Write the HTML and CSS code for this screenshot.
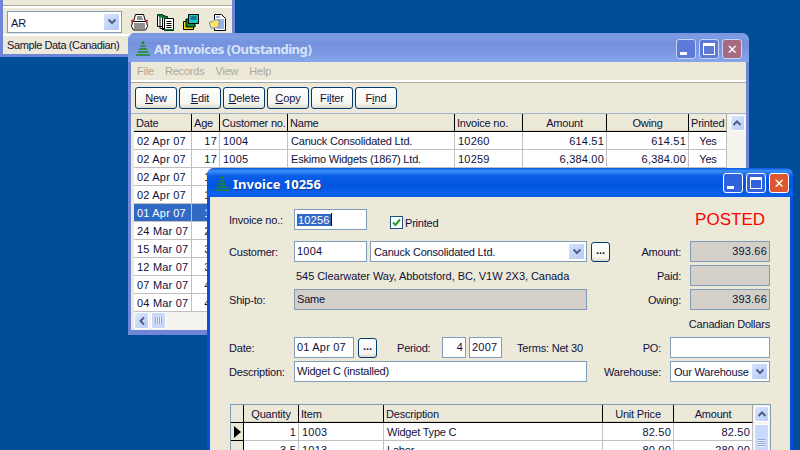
FILE: index.html
```html
<!DOCTYPE html>
<html lang="en">
<head>
<meta charset="utf-8">
<title>AR Invoices</title>
<link rel="stylesheet" href="styles.css">
</head>
<body>
<svg class="defs" width="0" height="0" aria-hidden="true">
  <symbol id="tree" viewBox="0 0 16 16">
    <path d="M6.500 2h3M5.500 5h5M4 8h8M2.500 11h11M1 14h14" stroke="#1f8a1f" stroke-width="1.600" fill="none"/>
    <path d="M8 0v3" stroke="#1f8a1f" stroke-width="1.500"/>
  </symbol>
  <symbol id="down" viewBox="0 0 10 8"><path d="M1.500 1.500 5 5l3.500-3.500" fill="none" stroke="#4d6185" stroke-width="2"/></symbol>
  <symbol id="up" viewBox="0 0 10 8"><path d="M1.500 6 5 2.500 8.500 6" fill="none" stroke="#4d6185" stroke-width="2"/></symbol>
  <symbol id="left" viewBox="0 0 8 10"><path d="M6 1.500 2.500 5 6 8.500" fill="none" stroke="#4d6185" stroke-width="2"/></symbol>
</svg>

<section class="win win-main">
  <div class="main-sep"></div>
  <div class="main-tools">
    <div class="combo combo-module"><span class="combo-text">AR</span><span class="combo-btn"><svg width="10" height="8"><use href="#down"/></svg></span></div>
    <svg class="tool" width="17" height="17" viewBox="0 0 17 17">
      <path d="M4.500.5h8l2 7h-12z" fill="#fff" stroke="#000"/>
      <path d="M1.500 7.500h14l1 5-2 3.500h-12L.5 12.500z" fill="#fff" stroke="#000"/>
      <path d="M3 10h11M3 12h11M3 14h11M6 3h5M6 5h6" stroke="#222"/>
      <circle cx="1.500" cy="7" r="1.500" fill="#d22"/><circle cx="15.500" cy="7" r="1.500" fill="#d22"/>
    </svg>
    <svg class="tool" width="17" height="17" viewBox="0 0 17 17">
      <path d="M.5.500h5v12h-5zM3 1.500h5v13H3zM5.500 2.500h5v13h-5z" fill="#fff" stroke="#000"/>
      <path d="M7.500 4.500h9v12h-9z" fill="#fff" stroke="#000"/>
      <path d="M.5.500h5v2h-5zM3 1.500h5v2H3zM5.500 2.500h5v2h-5zM7.500 15h9v1.500h-9z" fill="#0a7a3a"/>
      <path d="M9.500 7.500h5M9.500 9.500h5M9.500 11.500h5M9.500 13.500h5" stroke="#000"/>
    </svg>
    <svg class="tool tool-wide" width="16" height="16" viewBox="0 0 16 16">
      <path d="M.5 7.500h10v8H.500z" fill="#e6e600" stroke="#000"/>
      <path d="M3 5h9v8H3z" fill="#0a8a3a" stroke="#000"/>
      <path d="M5.500.5h10v9h-10z" fill="#1cc4c4" stroke="#000"/>
      <path d="M7.500 3h6M7.500 5h6" stroke="#035"/>
    </svg>
    <svg class="tool" width="17" height="17" viewBox="0 0 17 17">
      <path d="M5.500.5h7l4 4v12h-11z" fill="#fff" stroke="#000"/>
      <path d="M7 3h4M8 6h7M8 8h7M8 10h7M8 12h7M8 14h7" stroke="#36c"/>
      <path d="M0 8h3l2-2h5v6l-3 2H2z" fill="#ffe65c" stroke="#7a8fc0"/>
    </svg>
  </div>
  <div class="main-status">Sample Data (Canadian)</div>
</section>

<section class="win win-list">
  <header class="title title-off">
    <svg class="logo" width="16" height="16"><use href="#tree"/></svg>
    <span class="title-text">AR Invoices (Outstanding)</span>
    <div class="caption">
      <span class="cap cap-min"><i></i></span>
      <span class="cap cap-max"><i></i></span>
      <span class="cap cap-close">&#10005;</span>
    </div>
  </header>
  <div class="client client-list">
    <nav class="menu"><span>File</span><span>Records</span><span>View</span><span>Help</span></nav>
    <div class="toolbar">
      <button class="btn"><u>N</u>ew</button>
      <button class="btn"><u>E</u>dit</button>
      <button class="btn"><u>D</u>elete</button>
      <button class="btn"><u>C</u>opy</button>
      <button class="btn">Fi<u>l</u>ter</button>
      <button class="btn">F<u>i</u>nd</button>
    </div>
    <div class="list-grid">
      <div class="list-body">
        <table class="grid grid-list">
          <colgroup><col class="c58"><col class="c28"><col class="c68"><col class="c167"><col class="c68"><col class="c84"><col class="c82"><col class="c38"></colgroup>
          <thead><tr><th>Date</th><th>Age</th><th>Customer no.</th><th>Name</th><th>Invoice no.</th><th class="ctr">Amount</th><th class="ctr">Owing</th><th>Printed</th></tr></thead>
          <tbody>
            <tr><td class="dig">02 Apr 07</td><td class="num">17</td><td class="dig">1004</td><td>Canuck Consolidated Ltd.</td><td class="dig">10260</td><td class="num">614.51</td><td class="num">614.51</td><td class="ctr">Yes</td></tr>
            <tr><td class="dig">02 Apr 07</td><td class="num">17</td><td class="dig">1005</td><td>Eskimo Widgets (1867) Ltd.</td><td class="dig">10259</td><td class="num">6,384.00</td><td class="num">6,384.00</td><td class="ctr">Yes</td></tr>
            <tr><td class="dig">02 Apr 07</td><td class="num">17</td><td></td><td></td><td></td><td></td><td></td><td></td></tr>
            <tr><td class="dig">02 Apr 07</td><td class="num">17</td><td></td><td></td><td></td><td></td><td></td><td></td></tr>
            <tr class="sel"><td class="dig">01 Apr 07</td><td class="num">18</td><td></td><td></td><td></td><td></td><td></td><td></td></tr>
            <tr><td class="dig">24 Mar 07</td><td class="num">26</td><td></td><td></td><td></td><td></td><td></td><td></td></tr>
            <tr><td class="dig">15 Mar 07</td><td class="num">35</td><td></td><td></td><td></td><td></td><td></td><td></td></tr>
            <tr><td class="dig">12 Mar 07</td><td class="num">38</td><td></td><td></td><td></td><td></td><td></td><td></td></tr>
            <tr><td class="dig">07 Mar 07</td><td class="num">43</td><td></td><td></td><td></td><td></td><td></td><td></td></tr>
            <tr><td class="dig">04 Mar 07</td><td class="num">46</td><td></td><td></td><td></td><td></td><td></td><td></td></tr>
          </tbody>
        </table>
        <div class="vscroll vscroll-list"><span class="sb-btn"><svg width="10" height="8"><use href="#up"/></svg></span></div>
      </div>
      <div class="hscroll"><span class="sb-btn sb-left"><svg width="8" height="10"><use href="#left"/></svg></span><span class="sb-thumb-h"></span></div>
    </div>
  </div>
</section>

<section class="win win-inv">
  <header class="title title-on">
    <svg class="logo" width="16" height="16"><use href="#tree"/></svg>
    <span class="title-text">Invoice 10256</span>
    <div class="caption">
      <span class="cap cap-min"><i></i></span>
      <span class="cap cap-max"><i></i></span>
      <span class="cap cap-close">&#10005;</span>
    </div>
  </header>
  <div class="client client-inv">
    <div class="row row-1">
      <label class="lab">Invoice no.:</label>
      <span class="field w73 dig"><span class="picked">10256</span><span class="caret"></span></span>
      <span class="check"><svg width="11" height="11" viewBox="0 0 11 11"><path d="M2 5.500 4.500 8 9 2.500" fill="none" stroke="#21a121" stroke-width="2"/></svg></span>
      <span class="check-lab">Printed</span>
      <span class="posted">POSTED</span>
    </div>
    <div class="row row-2">
      <label class="lab">Customer:</label>
      <span class="field w73 dig">1004</span>
      <div class="combo combo-cust"><span class="combo-text">Canuck Consolidated Ltd.</span><span class="combo-btn"><svg width="10" height="8"><use href="#down"/></svg></span></div>
      <button class="dots dots-cust">...</button>
      <label class="rlab">Amount:</label>
      <span class="field ro w80 num-f">393.66</span>
    </div>
    <div class="row row-3">
      <span class="address">545 Clearwater Way, Abbotsford, BC, V1W 2X3, Canada</span>
      <label class="rlab">Paid:</label>
      <span class="field ro w80"></span>
    </div>
    <div class="row row-3">
      <label class="lab">Ship-to:</label>
      <span class="field ro w293">Same</span>
      <label class="rlab">Owing:</label>
      <span class="field ro w80 num-f">393.66</span>
    </div>
    <div class="row row-cur"><span class="currency">Canadian Dollars</span></div>
    <div class="row row-date">
      <label class="lab">Date:</label>
      <span class="field w60 dig">01 Apr 07</span>
      <button class="dots dots-date">...</button>
      <label class="lab-period">Period:</label>
      <span class="field w24 num-f">4</span>
      <span class="field w33 dig">2007</span>
      <span class="terms">Terms: Net 30</span>
      <label class="rlab">PO:</label>
      <span class="field w100"></span>
    </div>
    <div class="row row-3">
      <label class="lab">Description:</label>
      <span class="field w293">Widget C (installed)</span>
      <label class="rlab">Warehouse:</label>
      <div class="combo combo-wh"><span class="combo-text">Our Warehouse</span><span class="combo-btn"><svg width="10" height="8"><use href="#down"/></svg></span></div>
    </div>
    <div class="inv-grid">
      <table class="grid grid-inv">
        <colgroup><col class="c13"><col class="c55"><col class="c85"><col class="c219"><col class="c71"><col class="c79"></colgroup>
        <thead><tr><th class="ind"></th><th class="ctr">Quantity</th><th>Item</th><th>Description</th><th class="ctr">Unit Price</th><th class="ctr">Amount</th></tr></thead>
        <tbody>
          <tr><td class="ind"><span class="tri"></span></td><td class="num">1</td><td class="dig">1003</td><td>Widget Type C</td><td class="num">82.50</td><td class="num">82.50</td></tr>
          <tr><td class="ind"></td><td class="num">3.5</td><td class="dig">1013</td><td>Labor</td><td class="num">80.00</td><td class="num">280.00</td></tr>
        </tbody>
      </table>
      <div class="vscroll vscroll-inv">
        <span class="sb-btn"><svg width="10" height="8"><use href="#up"/></svg></span>
        <span class="sb-thumb-v"><i></i></span>
      </div>
    </div>
  </div>
</section>
</body>
</html>
```

FILE: styles.css
```css
* { box-sizing: border-box; }
html, body { margin: 0; padding: 0; }
body {
  width: 800px; height: 450px; overflow: hidden; position: relative;
  background: #004e98;
  font: 11px/13px "Liberation Sans", Tahoma, sans-serif;
  letter-spacing: -.2px;
  color: #10103a;
}
.defs { position: absolute; }
u { text-decoration: underline; }
.dig, .grid .num, .num-f { letter-spacing: .2px; }

/* windows on the desktop */
.win { position: absolute; display: flex; flex-direction: column; }
.win-main {
  left: 0; top: 0; width: 235px; height: 57px;
  background: #ece9d8; border: 3px solid #6f86d8; border-top: 0;
}
.win-list {
  left: 128px; top: 33px; width: 621px; height: 302px;
  background: #6f86d8; border-radius: 7px 7px 0 0;
}
.win-inv {
  left: 207px; top: 168px; width: 586px; height: 320px;
  background: #0a50e0; border-radius: 7px 7px 0 0;
}

/* main window */
.main-sep { height: 8px; border-bottom: 2px solid #fff; box-shadow: inset 0 -1px #aca899; flex: none; }
.main-tools { display: flex; align-items: center; height: 28px; padding: 2px 0 0 4px; border-bottom: 2px solid #fff; flex: none; }
.tool { margin-right: 9px; flex: none; }
.tool-wide { margin-right: 10px; }
.combo-module { width: 115px; height: 22px; margin-right: 9px; }
.main-status { padding: 3px 0 0 4px; letter-spacing: -.4px; color: #10103a; white-space: nowrap; }

/* title bars */
.title { height: 29px; display: flex; align-items: center; padding-top: 3px; padding-left: 7px; flex: none; border-radius: 7px 7px 0 0; }
.title-off { padding-right: 7px; background: linear-gradient(#7a96df 0, #7d9ce4 4px, #7591dd 10px, #7b99e2 20px, #86a6ec 29px); }
.title-on { padding-right: 4px; background: linear-gradient(#0a58dc 0, #3d90f5 3px, #0a5de8 8px, #0355e0 18px, #0a62ee 26px, #0a58e0 29px); }
.title-on .caption { margin-top: -2px; }
.logo { flex: none; margin-right: 3px; }
.title-text { font-family: "Noto Sans", sans-serif; font-weight: 700; font-size: 13px; letter-spacing: 0; white-space: nowrap; flex: 1; }
.title-off .title-text { color: #d8e4f8; letter-spacing: -.45px; }
.title-on .title-text { color: #fff; text-shadow: 1px 1px #0f3aa0; }
.caption { display: flex; gap: 3px; flex: none; }
.cap { width: 20px; height: 20px; border: 1px solid #fff; border-radius: 3px; display: flex; position: relative; color: #fff; }
.cap-close { align-items: center; justify-content: center; font: 700 13px/1 "DejaVu Sans", sans-serif; }
.title-on .cap-min, .title-on .cap-max { background: #2f62dc; }
.title-on .cap-close { background: #dd5630; }
.title-off .cap { border-color: #c8d4f4; }
.title-off .cap-min, .title-off .cap-max { background: #5d7ad8; }
.title-off .cap-close { background: #a86a80; }
.cap-min i { width: 7px; height: 3px; background: #fff; margin: auto 0 3px 3px; }
.cap-max i { width: 12px; height: 12px; border: 1px solid #fff; border-top-width: 3px; margin: auto; }

/* client areas */
.client { background: #ece9d8; flex: 1; min-height: 0; }
.client-list { margin: 0 3px 5px 3px; }
.client-inv { margin: 0 3px; padding: 12px 20px 0 19px; }
.menu { height: 20px; display: flex; align-items: center; padding: 0 0 0 6px; border-bottom: 2px solid #fff; box-shadow: 0 1px #aca899; color: #aca899; }
.menu span { margin-right: 12px; }
.menu span:nth-child(1) { margin-right: 11px; }
.menu span:nth-child(2) { margin-right: 11px; }
.menu span:nth-child(3) { margin-right: 11px; }
.toolbar { display: flex; gap: 2px; padding: 5px 0 0 4px; height: 32px; border-bottom: 1px solid #9fb3cd; }
.btn {
  width: 42px; height: 22px; padding: 0; font: inherit; letter-spacing: -.1px; color: #10103a;
  border: 1px solid #003c74; border-radius: 3px;
  background: linear-gradient(#fff, #f5f4ed 80%, #dcd8c8);
}

/* grids */
.list-grid { margin-left: 3px; width: 612px; }
.list-body { display: flex; height: 198px; }
.grid { border-collapse: separate; border-spacing: 0; table-layout: fixed; background: #fff; flex: none; align-self: flex-start; }
.grid th, .grid td { padding: 1px 2px 0; height: 18px; white-space: nowrap; overflow: hidden; font-weight: 400; text-align: left; }
.grid th { background: #ece9d8; border-bottom: 1px solid #000; border-right: 1px solid #000; box-shadow: inset 0 -1px #d8d4c4; color: #10103a; }
.grid th:last-child { border-right: 1px solid #aca899; }
.grid td { border-bottom: 1px solid #c0c0c0; border-right: 1px solid #c0c0c0; padding-left: 3px; color: #10103a; }
.grid .num { text-align: right; }
.grid .ctr { text-align: center; }
.grid-list { width: 593px; }
.c58 { width: 58px; } .c28 { width: 28px; } .c68 { width: 68px; } .c167 { width: 167px; }
.c84 { width: 84px; } .c82 { width: 82px; } .c38 { width: 38px; }
.c13 { width: 13px; } .c55 { width: 55px; } .c85 { width: 85px; } .c219 { width: 219px; }
.c71 { width: 71px; } .c79 { width: 79px; }
.sel td { background: #316ac5; color: #fff; border-color: #c0c0c0; }

.vscroll { background: #f4f3ee; display: flex; flex-direction: column; align-items: center; flex: none; }
.vscroll-list { width: 19px; padding: 1px 1px 0 2px; }
.sb-btn {
  display: flex; align-items: center; justify-content: center; width: 15px; height: 16px;
  border: 1px solid #fff; border-radius: 2px;
  background: linear-gradient(135deg, #dbe6fd, #b9cbf8);
  flex: none;
}
.hscroll { height: 18px; background: #f4f3ee; display: flex; gap: 2px; }
.sb-left { height: 17px; }
.sb-thumb-h {
  width: 15px; height: 17px; border: 1px solid #fff; border-radius: 2px;
  background: #c9d8fb;
  position: relative;
}
.sb-thumb-h::after {
  content: ""; position: absolute; left: 3px; right: 3px; top: 4px; bottom: 4px;
  background: repeating-linear-gradient(90deg, #8fa6d8 0 1px, #e8eefc 1px 2px);
}

/* form rows */
.row { display: flex; align-items: flex-start; }
.row-1 { height: 21px; margin-bottom: 11px; }
.row-2 { height: 21px; margin-bottom: 3px; }
.row-3 { height: 21px; margin-bottom: 3px; }
.row-cur { height: 21px; justify-content: flex-end; align-items: center; padding-top: 2px; }
.row-date { height: 21px; margin: 3px 0 3px; }
.lab { width: 65px; padding-top: 5px; flex: none; }
.rlab { margin-left: auto; padding: 5px 9px 0 0; }
.field {
  display: block; height: 21px; background: #fff; border: 1px solid #7f9db9;
  padding: 3px 2px 0 2px; white-space: nowrap; overflow: hidden; flex: none;
}
.ro { background: #d4d0c8; }
.num-f { text-align: right; padding-right: 2px; }
.w73 { width: 73px; } .w80 { width: 80px; } .w293 { width: 293px; }
.w60 { width: 60px; } .w24 { width: 24px; } .w33 { width: 33px; margin-left: 3px; } .w100 { width: 100px; }
.picked { background: #316ac5; color: #fff; padding: 0 1px; }
.caret { display: inline-block; width: 1px; height: 13px; background: #000; vertical-align: -2px; }
.check {
  width: 13px; height: 13px; margin: 7px 0 0 23px; flex: none;
  border: 1px solid #1c5180; background: #fff; display: flex; align-items: center; justify-content: center;
}
.check-lab { margin: 8px 0 0 2px; }
.posted { margin: 1px 5px 0 auto; font-size: 17px; line-height: 19px; letter-spacing: 0; color: #f00; }
.combo { display: flex; align-items: center; background: #fff; border: 1px solid #7f9db9; flex: none; padding: 1px; }
.combo-text { flex: 1; padding: 2px 0 0 2px; white-space: nowrap; overflow: hidden; }
.combo-btn { width: 17px; height: 100%; border: 1px solid #fff; border-radius: 2px; background: linear-gradient(135deg, #d6e2fd, #b4c8f6); display: flex; align-items: center; justify-content: center; flex: none; }
.combo-cust { width: 217px; height: 21px; margin-left: 3px; }
.combo-wh { width: 100px; height: 21px; }
.dots {
  width: 19px; height: 20px; padding: 0 0 4px; font: 700 11px/12px "Liberation Sans", sans-serif; color: #10103a;
  border: 1px solid #003c74; border-radius: 3px; background: linear-gradient(#fff, #f5f4ed 80%, #dcd8c8); flex: none;
}
.dots-cust { margin: 1px 0 0 4px; }
.dots-date { margin: 1px 0 0 4px; }
.address { margin: 5px 0 0 67px; letter-spacing: -.05px; white-space: nowrap; }
.currency { white-space: nowrap; }
.lab-period { margin-left: 20px; padding-top: 5px; width: 45px; flex: none; }
.terms { margin-left: 15px; padding-top: 5px; white-space: nowrap; }

.inv-grid { display: flex; width: 541px; margin: 22px 0 0 1px; border: 1px solid #7f9db9; height: 100px; background: #fff; }
.grid-inv { width: 522px; }
.grid .ind { background: #ece9d8; border-right: 1px solid #000; border-bottom: 1px solid #000; padding: 0; box-shadow: none; }
.tri { display: block; width: 0; height: 0; margin-left: 3px; border-left: 7px solid #000; border-top: 6px solid transparent; border-bottom: 6px solid transparent; }
.vscroll-inv { width: 17px; gap: 2px; padding-top: 1px; }
.sb-thumb-v { width: 15px; height: 60px; border: 1px solid #fff; border-radius: 2px; background: #c9d8fb; display: flex; justify-content: center; padding-top: 14px; flex: none; }
.sb-thumb-v i { display: block; width: 7px; height: 8px; background: repeating-linear-gradient(#8fa6d8 0 1px, #e8eefc 1px 2px); }
```
